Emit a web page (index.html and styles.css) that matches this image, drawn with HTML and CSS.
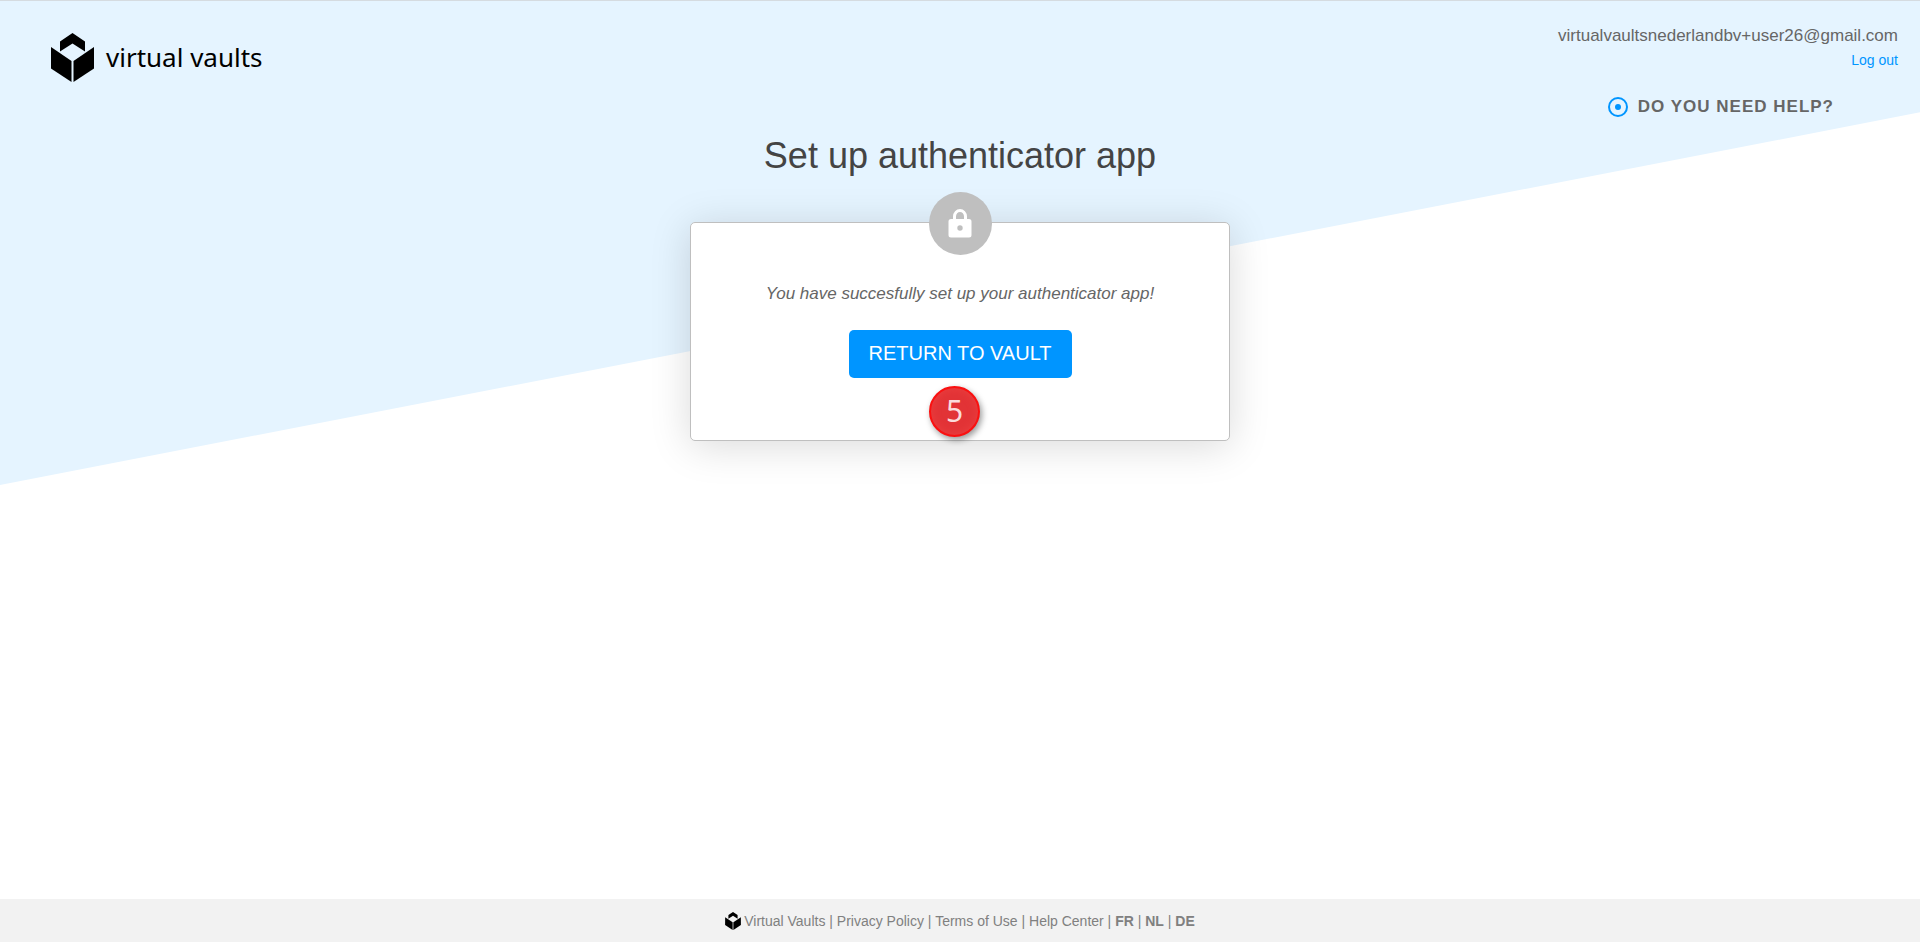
FILE: index.html
```html
<!DOCTYPE html>
<html lang="en">
<head>
  <meta charset="UTF-8">
  <meta name="viewport" content="width=device-width, initial-scale=1.0">
  <title>Set up authenticator app</title>
  <link rel="stylesheet" href="styles.css">
</head>
<body>
  <svg class="symbols" aria-hidden="true">
    <symbol id="cube" viewBox="0 0 43 49">
      <path d="M21.500 0 L34 8.500 V18.500 L21.500 10.500 L9 18.500 V8.500 Z"/>
      <path d="M0 14 L20.500 28 V49 L0 35.500 Z"/>
      <path d="M43 14 L22.500 28 V49 L43 35.500 Z"/>
    </symbol>
  </svg>

  <div class="backdrop"></div>

  <header class="header">
    <a class="logo" href="#">
      <svg class="logo-mark" aria-hidden="true"><use href="#cube"/></svg>
      <span>virtual vaults</span>
    </a>
    <div class="account">
      <span class="email">virtualvaultsnederlandbv+user26@gmail.com</span>
      <a class="logout" href="#">Log out</a>
      <a class="help" href="#">
        <svg class="help-icon" viewBox="0 0 20 20" aria-hidden="true">
          <circle class="ring" cx="10" cy="10" r="9"/>
          <circle class="dot" cx="10" cy="10" r="3"/>
        </svg>
        Do you need help?
      </a>
    </div>
  </header>

  <main>
    <h1>Set up authenticator app</h1>
    <section class="card">
      <div class="lock">
        <svg viewBox="0 0 24 30" aria-hidden="true">
          <path d="M3 10 H5 V7.500 A7 7.500 0 0 1 19 7.500 V10 H21 A2.500 2.500 0 0 1 23.500 12.500 V26 A2.500 2.500 0 0 1 21 28.500 H3 A2.500 2.500 0 0 1 0.500 26 V12.500 A2.500 2.500 0 0 1 3 10 Z M8 10 H16 V7.500 A4 4.500 0 0 0 8 7.500 Z M12 16.300 A2.700 2.700 0 1 0 12 21.700 A2.700 2.700 0 1 0 12 16.300 Z" fill-rule="evenodd"/>
        </svg>
      </div>
      <p>You have succesfully set up your authenticator app!</p>
      <button class="return" type="button">Return to vault</button>
      <span class="step">5</span>
    </section>
  </main>

  <footer>
    <svg class="footer-mark" aria-hidden="true"><use href="#cube"/></svg>
    <div>
      <a href="#">Virtual Vaults</a> | <a href="#">Privacy Policy</a> | <a href="#">Terms of Use</a> | <a href="#">Help Center</a> |
      <a class="lang" href="#">FR</a> | <a class="lang" href="#">NL</a> | <a class="lang" href="#">DE</a>
    </div>
  </footer>
</body>
</html>
```
FILE: styles.css
```css
/* Global Styles */
* {
  box-sizing: border-box;
}

body {
  margin: 0;
  min-height: 100vh;
  display: flex;
  flex-direction: column;
  border-top: 1px solid #d5dbe0;
  background-color: #fff;
  color: #666;
  font-family: "Liberation Sans", Arial, sans-serif;
  font-size: 17px;
}

a {
  color: inherit;
  text-decoration: none;
}

.symbols {
  position: absolute;
  width: 0;
  height: 0;
}

/* Slanted blue background */
.backdrop {
  position: absolute;
  z-index: -1;
  top: 1px;
  left: 0;
  width: 100%;
  height: 484px;
  background-color: #e5f4ff;
  clip-path: polygon(0 0, 100% 0, 100% 23%, 0 100%);
}

/* Header */
.header {
  display: flex;
  justify-content: space-between;
  align-items: flex-start;
  padding: 25px 22px 0 51px;
}

.logo {
  display: flex;
  align-items: center;
  gap: 12px;
  padding-top: 6px;
  color: #000;
  font-family: "Noto Sans", sans-serif;
  font-size: 26px;
  line-height: 50px;
}

.logo-mark {
  width: 43px;
  height: 49px;
}

.account {
  display: flex;
  flex-direction: column;
  align-items: flex-end;
}

.email {
  line-height: 20px;
}

.logout {
  margin-top: 5px;
  color: #0095ff;
  font-size: 14px;
  line-height: 18px;
}

.help {
  display: flex;
  align-items: center;
  gap: 10px;
  margin: 28px 64px 0 0;
  font-weight: bold;
  line-height: 20px;
  letter-spacing: 1px;
  text-transform: uppercase;
}

.help-icon {
  width: 20px;
  height: 20px;
}

.help-icon .ring {
  fill: none;
  stroke: #0095ff;
  stroke-width: 2;
}

.help-icon .dot {
  fill: #0095ff;
}

/* Main */
main {
  flex: 1;
  display: flex;
  flex-direction: column;
  align-items: center;
  padding: 19px 16px;
}

h1 {
  margin: 0 0 46px;
  color: #444;
  font-size: 36px;
  font-weight: normal;
  line-height: 40px;
}

.card {
  position: relative;
  display: flex;
  flex-direction: column;
  align-items: center;
  width: 100%;
  max-width: 540px;
  padding: 61px 24px 62px;
  background-color: #fff;
  border: 1px solid #bfbfbf;
  border-radius: 5px;
  box-shadow: 0 5px 40px rgba(0, 0, 0, 0.15);
}

.lock {
  position: absolute;
  top: -31px;
  display: flex;
  align-items: center;
  justify-content: center;
  width: 63px;
  height: 63px;
  border-radius: 50%;
  background-color: #bfbfbf;
}

.lock svg {
  width: 24px;
  height: 30px;
  fill: #fff;
}

.card p {
  margin: 0 0 26px;
  font-style: italic;
  line-height: 20px;
}

.return {
  height: 48px;
  padding: 0 20px 2px;
  border: none;
  border-radius: 5px;
  background-color: #0095ff;
  color: #fff;
  font-family: inherit;
  font-size: 20px;
  text-transform: uppercase;
  cursor: pointer;
}

/* Step marker */
.step {
  position: absolute;
  left: 238px;
  bottom: 3px;
  width: 51px;
  height: 51px;
  border: 2px solid #fb1010;
  border-radius: 50%;
  background-color: #e23336;
  box-shadow: 2px 3px 6px rgba(0, 0, 0, 0.4), inset 0 0 8px #ec4040;
  color: #fbdcdc;
  font-family: "Noto Sans", sans-serif;
  font-size: 30px;
  line-height: 46px;
  text-align: center;
}

/* Footer */
footer {
  display: flex;
  align-items: center;
  justify-content: center;
  gap: 3px;
  height: 43px;
  background-color: #f2f2f2;
  color: #808080;
  font-size: 14px;
}

.footer-mark {
  width: 16px;
  height: 18px;
}

.lang {
  font-weight: bold;
}
```
